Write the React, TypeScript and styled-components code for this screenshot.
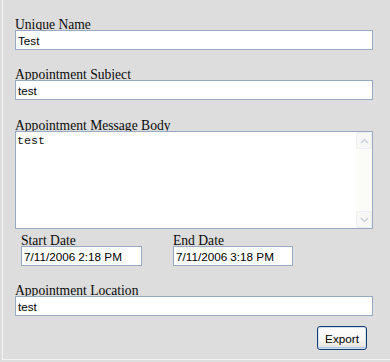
import React from "react";
import styled, { createGlobalStyle } from "styled-components";

const GlobalStyle = createGlobalStyle`
  html, body {
    margin: 0;
    padding: 0;
    background: #dddddd;
  }
`;

const Page = styled.div`
  width: 390px;
  height: 362px;
  background: #dddddd;
  box-sizing: border-box;
  padding-left: 2px;
`;

const Frame = styled.form`
  height: 360px;
  box-sizing: border-box;
  border-left: 1px solid #f3f3f3;
  border-bottom: 1px solid #f3f3f3;
  padding: 19px 0 0 12px;
  display: flex;
  flex-direction: column;
`;

const Field = styled.div<{ $gap?: number }>`
  display: flex;
  flex-direction: column;
  margin-top: ${({ $gap }) => $gap ?? 0}px;
`;

const Label = styled.label`
  display: block;
  height: 11px;
  line-height: 11px;
  font-family: "Liberation Serif", "Times New Roman", serif;
  font-size: 13.6px;
  color: #0a0a0a;
  white-space: nowrap;
`;

const TextInput = styled.input<{ $width?: number }>`
  box-sizing: border-box;
  width: ${({ $width }) => $width ?? 358}px;
  height: 20px;
  margin: 0;
  padding: 0 2px;
  border: 1px solid #98a9c2;
  background: #fff;
  font-family: "Liberation Sans", Arial, sans-serif;
  font-size: 11.7px;
  color: #000;
  outline: none;
`;

const MemoBox = styled.div`
  box-sizing: border-box;
  width: 358px;
  height: 98px;
  border: 1px solid #98a9c2;
  background: #fff;
  display: flex;
`;

const Memo = styled.textarea`
  flex: 1;
  border: 0;
  margin: 0;
  padding: 2px 1px;
  resize: none;
  outline: none;
  overflow: hidden;
  font-family: "Liberation Mono", "Courier New", monospace;
  font-size: 11.7px;
  color: #111;
  background: transparent;
`;

const ScrollTrack = styled.div`
  width: 16px;
  background: #fbfbf8;
  display: flex;
  flex-direction: column;
  justify-content: space-between;
`;

const ScrollArrow = styled.div`
  height: 17px;
  box-sizing: border-box;
  border: 1px solid #eceef1;
  border-radius: 2px;
  background: #f7f7f5;
  display: flex;
  align-items: center;
  justify-content: center;
`;

const DateRow = styled.div`
  display: flex;
  gap: 31px;
  padding-left: 6px;
  margin-top: 6px;
`;

const ButtonRow = styled.div`
  display: flex;
  justify-content: flex-end;
  width: 358px;
  padding-right: 6px;
  box-sizing: border-box;
  margin-top: 10px;
`;

const ExportButton = styled.button`
  width: 50px;
  height: 24px;
  box-sizing: border-box;
  border: 1px solid #163f70;
  border-radius: 3px;
  background: linear-gradient(#ffffff, #f6f5f1 60%, #e4e1d8);
  box-shadow: inset 0 0 0 1px #cfdff2, inset 0 -1px 0 1px #aec8ea;
  font-family: "Liberation Sans", Arial, sans-serif;
  font-size: 11.7px;
  color: #000;
  padding: 0;
`;

const Chevron = ({ up }: { up?: boolean }) => (
  <svg width="9" height="6" viewBox="0 0 9 6">
    <path
      d={up ? "M1 5 L4.5 1.5 L8 5" : "M1 1 L4.5 4.5 L8 1"}
      fill="none"
      stroke="#ccd1da"
      strokeWidth="1.5"
    />
  </svg>
);

export default function App() {
  return (
    <Page>
      <GlobalStyle />
      <Frame onSubmit={(e) => e.preventDefault()}>
        <Field>
          <Label>Unique Name</Label>
          <TextInput defaultValue="Test" />
        </Field>
        <Field $gap={19}>
          <Label>Appointment Subject</Label>
          <TextInput defaultValue="test" />
        </Field>
        <Field $gap={20}>
          <Label>Appointment Message Body</Label>
          <MemoBox>
            <Memo defaultValue="test" />
            <ScrollTrack>
              <ScrollArrow>
                <Chevron up />
              </ScrollArrow>
              <ScrollArrow>
                <Chevron />
              </ScrollArrow>
            </ScrollTrack>
          </MemoBox>
        </Field>
        <DateRow>
          <Field>
            <Label>Start Date</Label>
            <TextInput $width={121} defaultValue="7/11/2006 2:18 PM" />
          </Field>
          <Field>
            <Label>End Date</Label>
            <TextInput $width={120} defaultValue="7/11/2006 3:18 PM" />
          </Field>
        </DateRow>
        <Field $gap={19}>
          <Label>Appointment Location</Label>
          <TextInput defaultValue="test" autoFocus />
        </Field>
        <ButtonRow>
          <ExportButton type="button">Export</ExportButton>
        </ButtonRow>
      </Frame>
    </Page>
  );
}
